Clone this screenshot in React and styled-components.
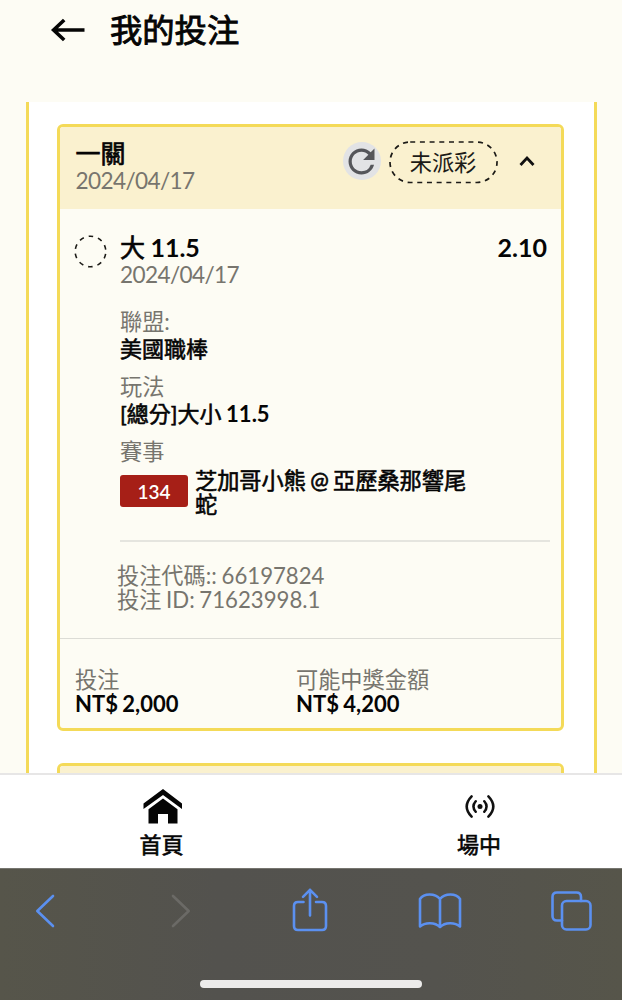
import React from "react";
import styled, { createGlobalStyle } from "styled-components";
import { MdRefresh } from "react-icons/md";

const GlobalStyle = createGlobalStyle`
  * { box-sizing: border-box; }
  body {
    margin: 0;
    background: #fdfcf4;
    color: #050505;
    font-family: Lato, "Noto Sans CJK TC", sans-serif;
  }`;
const Screen = styled.div`
  display: flex;
  flex-direction: column;
  width: 622px;
  height: 1000px;
  overflow: hidden;`;
const TopBar = styled.header`
  display: flex;
  align-items: center;
  flex: none;
  height: 102px;
  padding: 0 0 42px 50px;`;
const Title = styled.h1`
  margin: 0 0 0 24px;
  font-size: 32.3px;
  line-height: 40px;
  font-weight: 400;
  -webkit-text-stroke: 0.9px #050505;`;
const List = styled.main`
  display: flex;
  flex-direction: column;
  gap: 32px;
  flex: 1;
  min-height: 0;
  overflow: hidden;
  margin: 0 25.5px 0 25.5px;
  padding: 22px 29.5px 0 28.5px;
  background: #fff;
  border: solid #f4da58;
  border-width: 0 3px;`;
const Card = styled.section`
  flex: none;
  border: 3px solid #f4da58;
  border-radius: 6px;
  background: #fdfcf4;
  overflow: hidden;`;
const CardHead = styled.div`
  display: flex;
  height: 82px;
  padding: 13px 14.5px 0 15.5px;
  background: #faf1cf;`;
const Grow = styled.div`
  flex: 1;`;
/* CJK glyphs are thickened by a stroke, latin runs use the real bold */
const Heading = styled.div`
  font-size: 25px;
  line-height: 27px;
  word-spacing: -1px;
  -webkit-text-stroke: 0.7px #050505;`;
const Latin = styled.span`
  font-weight: 700;
  -webkit-text-stroke: 0;`;
const Muted = styled.div`
  font-size: 22.2px;
  line-height: ${({ $line }) => $line || 26}px;
  color: #77756e;`;
const DateText = styled(Muted)`
  font-size: 22.6px;
  line-height: 28px;
  letter-spacing: -0.62px;`;
const Strong = styled.div`
  font-size: 22px;
  line-height: ${({ $line }) => $line || 27}px;
  word-spacing: -1px;
  -webkit-text-stroke: 0.6px #050505;`;
const Refresh = styled.button`
  display: flex;
  align-items: center;
  justify-content: center;
  width: 38px;
  height: 38px;
  margin: 2px 8px 0 0;
  padding: 0;
  border: 0;
  border-radius: 50%;
  background: #e2e3e5;
  color: #55565a;
  svg { flex: none; }`;
const Status = styled.div`
  position: relative;
  width: 109px;
  height: 43px;
  font-size: 22.2px;
  line-height: 46px;
  text-align: center;
  color: #1c1b17;`;
const Outline = styled.svg`
  position: absolute;
  left: 0;
  top: 1px;`;
const Toggle = styled.div`
  margin: 13px 12px 0 21px;
  line-height: 0;`;
const Bet = styled.div`
  display: flex;
  height: 430px;
  padding: 25px 11px 0 14px;
  border-bottom: 1px solid #dcdcd6;`;
const Ring = styled.svg`
  flex: none;
  margin: 1px 13px 0 0;`;
const BetTop = styled.div`
  display: flex;
  justify-content: space-between;
  padding-right: 3px;`;
const Field = styled.div`
  margin-top: ${({ $first }) => ($first ? 20 : 12)}px;`;
const Match = styled.div`
  display: flex;
  align-items: flex-start;
  gap: 7px;
  padding-top: 3px;`;
const Teams = styled.div`
  width: 280px;
  padding-top: 1px;
  font-size: 22.2px;
  line-height: 24px;
  word-spacing: -1.4px;
  -webkit-text-stroke: 0.6px #050505;`;
const Code = styled.div`
  flex: none;
  width: 68px;
  height: 32px;
  margin-top: 7px;
  border-radius: 3px;
  background: #a61f17;
  color: #fff;
  font-size: 19px;
  font-weight: 600;
  line-height: 33px;
  text-align: center;`;
const Ids = styled.div`
  margin-top: 23px;
  padding-top: 22px;
  border-top: 2px solid #e5e5df;
  word-spacing: -1px;
  div { margin-left: -3px; }`;
const Totals = styled.div`
  display: grid;
  grid-template-columns: 221px 1fr;
  height: 89px;
  padding: 29px 0 0 15px;`;
const TabBar = styled.nav`
  display: grid;
  grid-template-columns: 323px 312px;
  flex: none;
  height: 95px;
  background: #fff;
  border-top: 2px solid #e7e6e6;`;
const Tab = styled.div`
  display: flex;
  flex-direction: column;
  align-items: center;
  padding-top: 12px;
  font-size: 22px;
  line-height: 30px;
  -webkit-text-stroke: 0.6px #050505;
  svg { margin-bottom: 5px; }`;
const Browser = styled.footer`
  flex: none;
  height: 132px;
  padding-top: 18px;
  background: linear-gradient(90deg, #56554a, #53524e 35%, #54534e 70%, #56554a);
  border-top: 1px solid #76756f;`;
const BrowserRow = styled.div`
  display: flex;
  justify-content: space-between;
  align-items: center;
  height: 48px;
  padding: 0 26px 0 21px;`;
const HomeIndicator = styled.div`
  width: 222px;
  height: 8px;
  margin: 45px 0 0 200px;
  border-radius: 4px;
  background: #ecebea;`;

const ToolIcon = ({ children, color = "#5b90f0" }) => (
  <svg width="48" height="48" viewBox="0 0 48 48" fill="none" stroke={color} strokeWidth="2.6" strokeLinecap="round" strokeLinejoin="round">
    {children}
  </svg>
);

const BetCard = () => (
  <Card>
    <CardHead>
      <Grow>
        <Heading>一關</Heading>
        <DateText>2024/04/17</DateText>
      </Grow>
      <Refresh>
        <MdRefresh size={39} />
      </Refresh>
      <Status>
        <Outline width="109" height="43" fill="none">
          <rect x="1" y="1" width="107" height="40.5" rx="20.2" stroke="#1c1b17" strokeWidth="1.7" strokeDasharray="5 4.7" />
        </Outline>
        未派彩
      </Status>
      <Toggle>
        <svg width="16" height="16" viewBox="0 0 16 16" fill="none">
          <path d="M1.5 12L8 5L14.5 12" stroke="#111" strokeWidth="2.8" />
        </svg>
      </Toggle>
    </CardHead>
    <Bet>
      <Ring width="33" height="33" fill="none">
        <circle cx="16.5" cy="16.5" r="15.3" stroke="#1c1b17" strokeWidth="1.6" strokeDasharray="4.6 5.01" strokeDashoffset="-2.5" />
      </Ring>
      <Grow>
        <BetTop>
          <Heading>大 <Latin>11.5</Latin></Heading>
          <Heading><Latin>2.10</Latin></Heading>
        </BetTop>
        <DateText>2024/04/17</DateText>
        <Field $first>
          <Muted>聯盟:</Muted>
          <Strong>美國職棒</Strong>
        </Field>
        <Field>
          <Muted>玩法</Muted>
          <Strong>[總分]大小 <Latin>11.5</Latin></Strong>
        </Field>
        <Field>
          <Muted>賽事</Muted>
          <Match>
            <Code>134</Code>
            <Teams>芝加哥小熊 @ 亞歷桑那響尾蛇</Teams>
          </Match>
        </Field>
        <Ids>
          <Muted $line={24}>投注代碼:: 66197824</Muted>
          <Muted $line={24}>投注 ID: 71623998.1</Muted>
        </Ids>
      </Grow>
    </Bet>
    <Totals>
      <div>
        <Muted $line={24}>投注</Muted>
        <Strong $line={24}><Latin>NT$ 2,000</Latin></Strong>
      </div>
      <div>
        <Muted $line={24}>可能中獎金額</Muted>
        <Strong $line={24}><Latin>NT$ 4,200</Latin></Strong>
      </div>
    </Totals>
  </Card>
);

const App = () => (
  <>
    <GlobalStyle />
    <Screen>
      <TopBar>
        <svg width="36" height="26" viewBox="0 0 36 26" fill="none" stroke="#050505" strokeWidth="3.6">
          <path d="M3 13H34.5M14.2 3L3.6 13L14.2 23" />
        </svg>
        <Title>我的投注</Title>
      </TopBar>
      <List>
        <BetCard />
        <Card>
          <CardHead />
        </Card>
      </List>
      <TabBar>
        <Tab>
          <svg width="40" height="38" viewBox="0 0 40 38">
            <path d="M21 2L40 16.5V22L21 8L1.5 22V16.5Z" fill="#050505" />
            <path d="M21 11.5L35.5 22.2V36.5H26V27H16V36.5H6.5V22.2Z" fill="#050505" />
          </svg>
          首頁
        </Tab>
        <Tab>
          <svg width="40" height="38" viewBox="0 0 40 38" fill="none" stroke="#111" strokeWidth="2.5" strokeLinecap="round">
            <circle cx="21" cy="19.5" r="2.5" fill="#111" stroke="none" />
            <path d="M16.7 14.3Q12.2 19.5 16.7 24.7M25.3 14.3Q29.8 19.5 25.3 24.7M12.6 9.3Q2.8 19.5 12.6 29.7M29.4 9.3Q39.2 19.5 29.4 29.7" />
          </svg>
          場中
        </Tab>
      </TabBar>
      <Browser>
        <BrowserRow>
          <ToolIcon><path d="M32 9L16.3 24L32 39" /></ToolIcon>
          <ToolIcon color="#6b6a66"><path d="M20 9L35.7 24L20 39" /></ToolIcon>
          <ToolIcon>
            <path d="M18.5 15H13Q9 15 9 19V39Q9 43 13 43H37Q41 43 41 39V19Q41 15 37 15H31M25 28.5V2.8M18 9.8L25 2.8L32 9.8" />
          </ToolIcon>
          <ToolIcon>
            <path d="M24 12C19 6 8 6 4 12V39.5C9 35 19 35 24 40C29 35 39 35 44 39.5V12C40 6 29 6 24 12ZM24 12V40" />
          </ToolIcon>
          <ToolIcon>
            <rect x="14" y="14" width="28.5" height="28.5" rx="4.5" />
            <path d="M14 33.5H9Q4.5 33.5 4.5 29V10Q4.5 5.5 9 5.5H28.5Q33 5.5 33 10V14" />
          </ToolIcon>
        </BrowserRow>
        <HomeIndicator />
      </Browser>
    </Screen>
  </>
);

export default App;
